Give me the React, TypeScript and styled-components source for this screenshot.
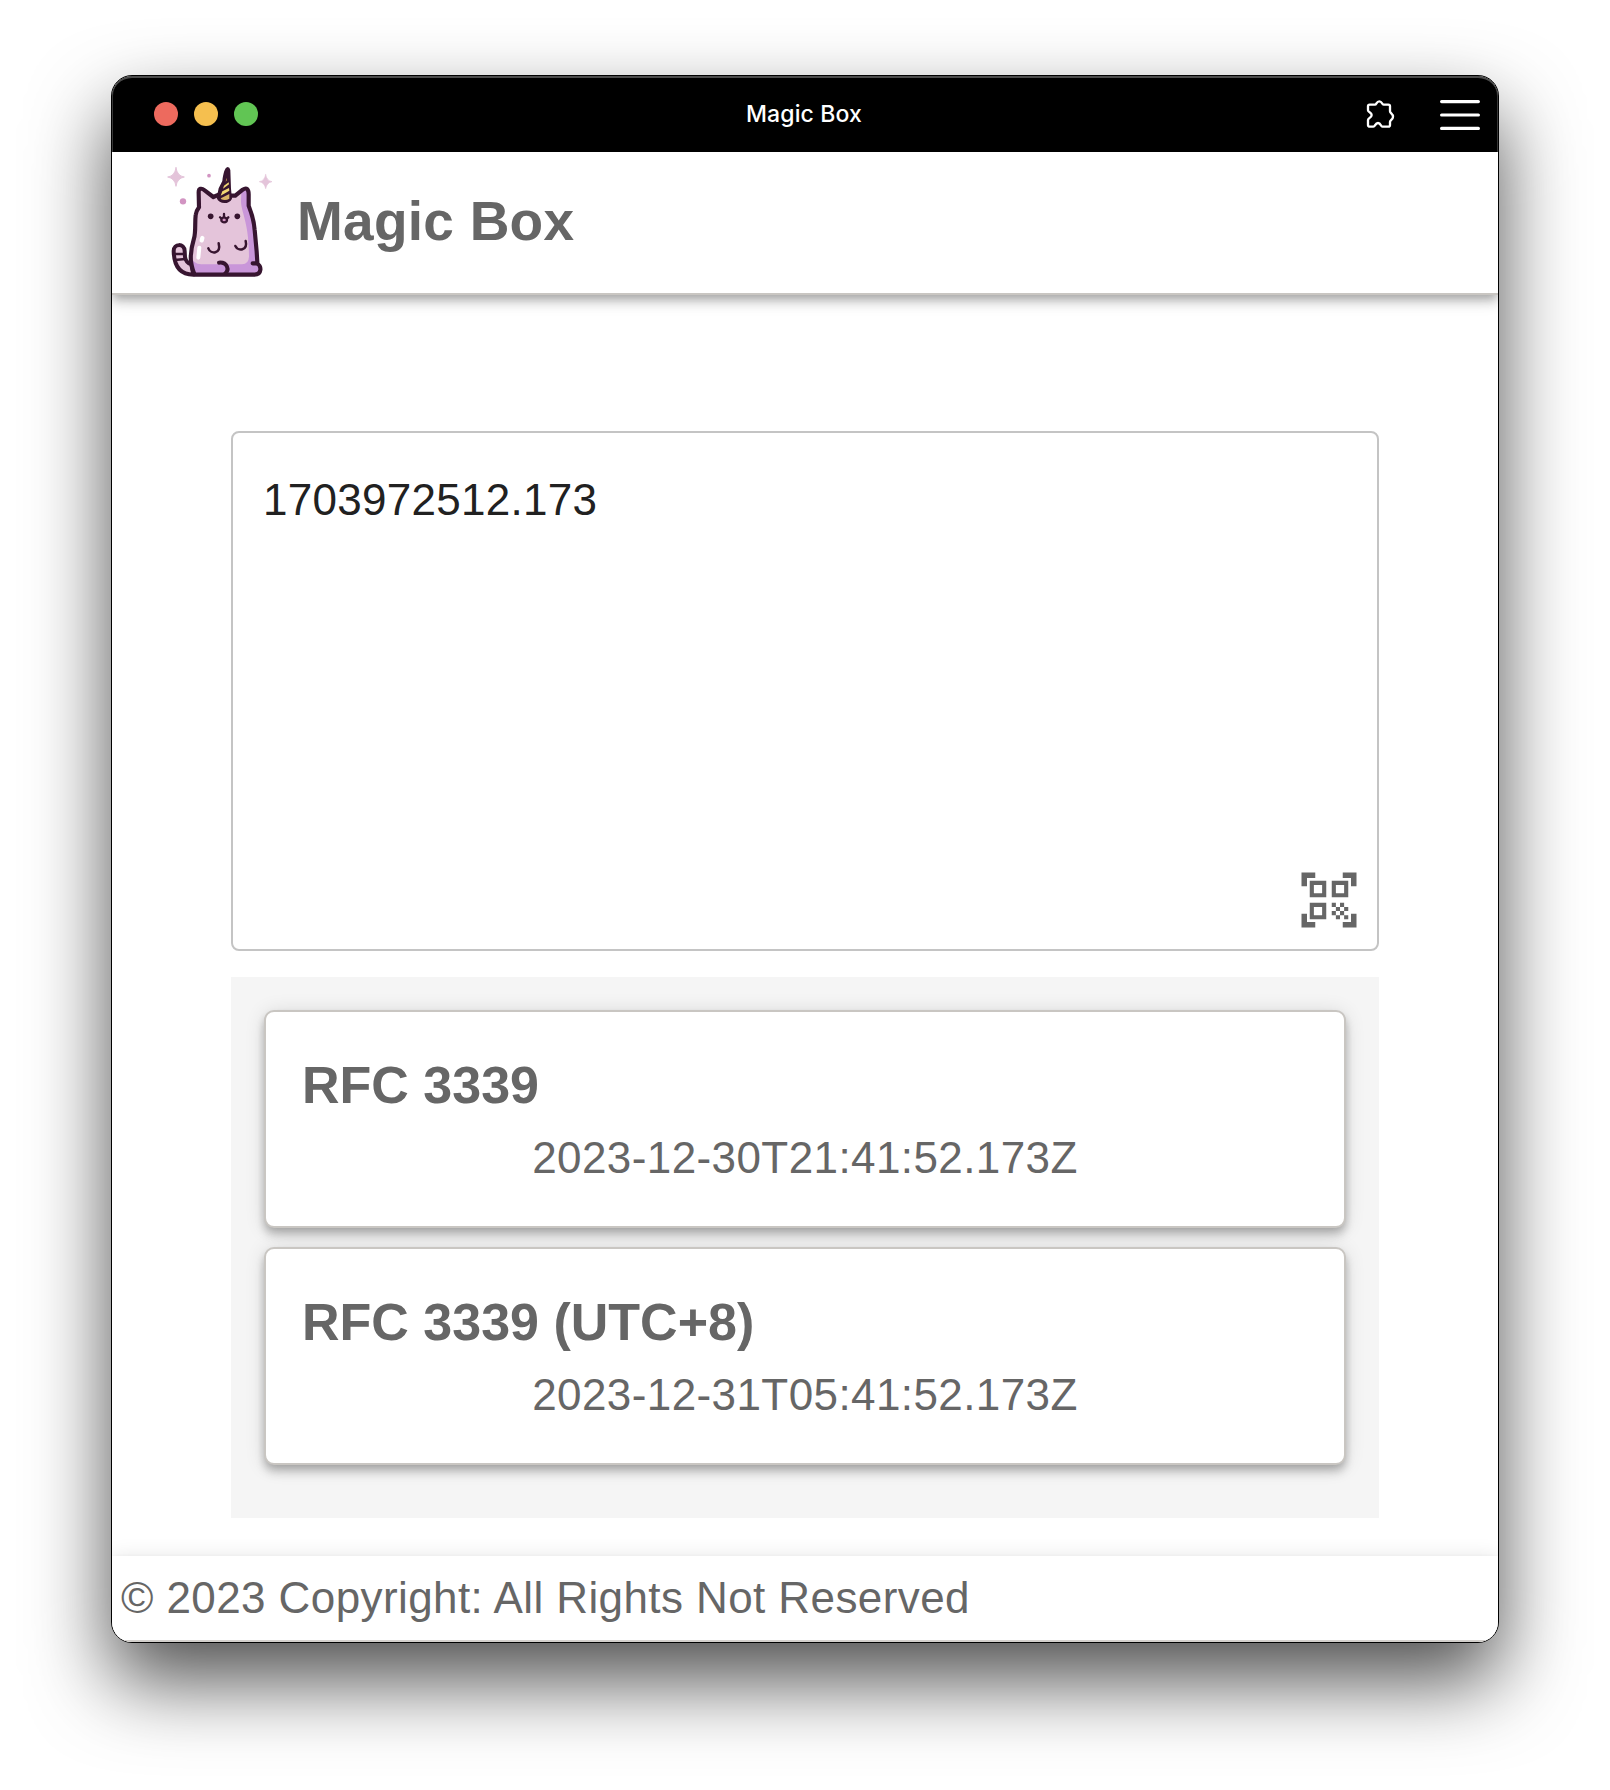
import React from 'react';
import styled, { createGlobalStyle } from 'styled-components';

const GlobalStyle = createGlobalStyle`
  *, *::before, *::after { box-sizing: border-box; }
  html, body { margin: 0; padding: 0; background: #fff; }
  body { overflow: hidden; }
`;

const Desktop = styled.div`
  width: 1610px;
  height: 1790px;
  padding: 75px 111px 0;
  overflow: hidden;
  background: #fff;
  font-family: 'Liberation Sans', Arial, sans-serif;
  color: #666;
`;

const Window = styled.div`
  width: 1388px;
  height: 1568px;
  display: flex;
  flex-direction: column;
  border: 1px solid #000;
  border-radius: 21px;
  background: #fff;
  overflow: hidden;
  box-shadow: 0 38px 80px rgba(0, 0, 0, 0.69);
`;

const TitleBar = styled.div`
  flex: none;
  height: 76px;
  display: grid;
  grid-template-columns: 1fr auto 1fr;
  align-items: center;
  padding: 0 18px 0 42px;
  background: #000;
  border-radius: 20px 20px 0 0;
  box-shadow: inset 0 2px 0 #4b4b4b, inset 1px 0 0 #383838, inset -1px 0 0 #383838;
`;

const Lights = styled.div`
  display: flex;
  gap: 16px;
`;

const Light = styled.span<{ $color: string }>`
  width: 24px;
  height: 24px;
  border-radius: 50%;
  background: ${(p) => p.$color};
`;

const WindowTitle = styled.div`
  font-family: Inter, Roboto, sans-serif;
  font-size: 23px;
  font-weight: 500;
  line-height: 28px;
  letter-spacing: 0.15px;
  color: #fff;
  transform: translateX(-13px);
`;

const Actions = styled.div`
  display: flex;
  justify-content: flex-end;
  align-items: center;
  gap: 44px;
  padding-top: 2px;

  svg { display: block; }
`;

const Header = styled.header`
  flex: none;
  height: 143px;
  display: flex;
  align-items: flex-start;
  gap: 17px;
  padding: 3px 48px 0;
  border-bottom: 2px solid #c9c6c2;
  box-shadow: 0 4px 8px -2px rgba(0, 0, 0, 0.2), 0 8px 10px rgba(0, 0, 0, 0.14), 0 2px 20px rgba(0, 0, 0, 0.12);

  svg { display: block; flex: none; }
`;

const AppName = styled.h1`
  margin: 33px 0 0;
  font-size: 55px;
  line-height: 66px;
  font-weight: 700;
  letter-spacing: 0.25px;
  white-space: nowrap;
`;

const Main = styled.main`
  flex: 1;
  display: flex;
  flex-direction: column;
  gap: 26px;
  padding: 136px 119px 0;
`;

const InputBox = styled.div`
  height: 520px;
  display: flex;
  flex-direction: column;
  justify-content: space-between;
  padding: 40px 15px 16px 30px;
  border: 2px solid #c4c4c4;
  border-radius: 8px;
`;

const InputText = styled.div`
  font-size: 44px;
  line-height: 54px;
  letter-spacing: 0.28px;
  color: #212121;
`;

const ScanButton = styled.button`
  align-self: flex-end;
  padding: 0;
  border: 0;
  background: none;
  color: #666;

  svg { display: block; }
`;

const Results = styled.section`
  height: 541px;
  display: flex;
  flex-direction: column;
  gap: 19px;
  padding: 33px 33px 0;
  background: #f5f5f5;
`;

const Card = styled.article`
  height: 218px;
  padding: 42px 36px 0;
  border: 2px solid #c9c6c2;
  border-radius: 10px;
  background: #fff;
  box-shadow: 0 4px 8px -2px rgba(0, 0, 0, 0.2), 0 8px 10px rgba(0, 0, 0, 0.14), 0 2px 20px rgba(0, 0, 0, 0.12);
`;

const CardTitle = styled.h2`
  margin: 0;
  font-size: 52px;
  line-height: 62px;
  font-weight: 700;
`;

const CardValue = styled.p`
  margin: 15px 0 0;
  font-size: 44px;
  line-height: 54px;
  letter-spacing: 0.41px;
  text-align: center;
`;

const Footer = styled.footer`
  flex: none;
  height: 86px;
  padding: 15px 9px 0;
  border-bottom: 2px solid #d3d0cc;
  background: #fff;
  font-size: 44px;
  line-height: 54px;
  letter-spacing: 0.41px;
  white-space: nowrap;
  box-shadow: 0 4px 8px -2px rgba(0, 0, 0, 0.2), 0 8px 10px rgba(0, 0, 0, 0.14), 0 2px 20px rgba(0, 0, 0, 0.12);
`;

const UnicornCat = () => (
  <svg width="120" height="130" viewBox="0 0 360 390" fill="none" strokeLinecap="round" strokeLinejoin="round">
    <path d="M48 38Q51 63 73 66Q51 70 48 94Q45 70 23 66Q45 63 48 38Z" fill="#e4c4da" stroke="#e4c4da" strokeWidth="3" />
    <path d="M317 59Q320 77 336 80Q320 83 317 101Q314 83 298 80Q314 77 317 59Z" fill="#e4c4da" stroke="#e4c4da" strokeWidth="2" />
    <circle cx="147" cy="62" r="5.5" fill="#d294c2" />
    <circle cx="69" cy="139" r="9.5" fill="#d294c2" />
    <path
      d="M100 359C62 359 42 335 41 288C41 265 73 264 74 288L75 306C77 320 84 325 94 328Z"
      fill="#e4c4da" stroke="#371530" strokeWidth="12"
    />
    <path d="M43 297H73M44 315L76 312" stroke="#371530" strokeWidth="7" />
    <path
      d="M117 157L116 110C117 98 126 100 134 106L160 125L226 122L248 104C260 96 266 106 265 118L266 152C277 180 282 195 284 225L290 290L293 325C306 331 304 359 283 359H106L93 320C90 292 96 270 102 250C108 230 104 205 107 180Q109 169 117 157Z"
      fill="#c996d9"
    />
    <path
      d="M117 157L116 110C117 98 126 100 134 106L160 125L226 122L244 112L243 140C244 160 251 175 256 200C262 225 267 260 267 305Q266 327 246 328H124Q98 326 95 305C92 285 99 265 102 250C108 230 104 205 107 180Q109 169 117 157Z"
      fill="#e4c4da"
    />
    <path d="M127 249L125 256" stroke="#fff" strokeWidth="13" />
    <path d="M118 278L115 308" stroke="#fff" strokeWidth="12" />
    <path
      d="M160 126L134 106C124 98 116 100 116 112L117 157Q108 169 107 180C104 205 108 230 102 250C96 270 90 292 93 320Q97 345 104 359H283C306 359 306 331 290 325H278M292 322L290 290L284 225C282 195 277 180 266 152V118C266 103 260 96 248 104L226 122M160 126L176 119M226 122H214"
      stroke="#371530" strokeWidth="12.5"
    />
    <path d="M177 323C202 321 210 345 194 357" stroke="#371530" strokeWidth="12" />
    <path
      d="M203 36C194 37 190 56 187 78L176 100L170 129C177 149 208 149 216 131L213 101L211 45Q209 36 203 36Z"
      fill="#371530"
    />
    <path d="M199 68L201 76L197 80Z" fill="#b58b4a" />
    <path d="M192 92L206 82L207 88L189 101Z" fill="#f3d873" />
    <path d="M187 109L207 99L208 107L182 122Z" fill="#f3d873" />
    <path d="M184 129L208 117V131Q196 139 182 132Z" fill="#dcb568" />
    <circle cx="152" cy="184" r="8.5" fill="#371530" />
    <circle cx="232" cy="184" r="8.5" fill="#371530" />
    <path d="M184 191Q183 202 192 202Q202 202 201 191" fill="#d294c2" stroke="#371530" strokeWidth="7" />
    <path d="M180 187Q186 194 192 185Q198 194 205 187M192 177V187" stroke="#371530" strokeWidth="7" />
    <path d="M145 280C152 299 184 297 176 265" stroke="#371530" strokeWidth="7.5" />
    <path d="M226 273C234 290 264 287 257 258" stroke="#371530" strokeWidth="7.5" />
  </svg>
);

const PuzzleIcon = () => (
  <svg width="30" height="30" viewBox="0 0 90 90" fill="none" stroke="#fff" strokeWidth="7" strokeLinejoin="round">
    <path d="M14 14H27C32 14 31 4 40 4C49 4 47 14 53 14H67Q72 14 72 19V34C72 40 81 41 81 50C81 59 72 60 72 66V75Q72 80 67 80H49C44 80 45 69 36 69C27 69 28 80 22 80H12Q6 80 6 75V60C6 54 17 53 17 45C17 37 6 37 6 31V19Q6 14 11 14Z" />
  </svg>
);

const MenuIcon = () => (
  <svg width="40" height="32" viewBox="0 0 40 32" stroke="#fff" strokeWidth="3.2" strokeLinecap="round">
    <path d="M1.6 2.6H38.4M1.6 16H38.4M1.6 29.4H38.4" />
  </svg>
);

const QrScanIcon = () => (
  <svg width="66" height="66" viewBox="0 0 24 24" fill="currentColor">
    <path d="M9.5 6.5v3h-3v-3h3M11 5H5v6h6V5zm-1.5 9.5v3h-3v-3h3M11 13H5v6h6v-6zm6.5-6.5v3h-3v-3h3M19 5h-6v6h6V5zm-6 8h1.5v1.5H13V13zm1.5 1.5H16V16h-1.5v-1.5zM16 13h1.5v1.5H16V13zm-3 3h1.5v1.5H13V16zm1.5 1.5H16V19h-1.5v-1.5zM16 16h1.5v1.5H16V16zm1.5-1.5H19V16h-1.5v-1.5zm0 3H19V19h-1.5v-1.5zM22 7h-2V4h-3V2h5v5zm0 15v-5h-2v3h-3v2h5zM2 22h5v-2H4v-3H2v5zM2 2v5h2V4h3V2H2z" />
  </svg>
);

const results = [
  { title: 'RFC 3339', value: '2023-12-30T21:41:52.173Z' },
  { title: 'RFC 3339 (UTC+8)', value: '2023-12-31T05:41:52.173Z' },
];

export default function App() {
  return (
    <>
      <GlobalStyle />
      <Desktop>
        <Window>
          <TitleBar>
            <Lights>
              <Light $color="#ed6a5e" />
              <Light $color="#f5bf4f" />
              <Light $color="#61c554" />
            </Lights>
            <WindowTitle>Magic Box</WindowTitle>
            <Actions>
              <PuzzleIcon />
              <MenuIcon />
            </Actions>
          </TitleBar>
          <Header>
            <UnicornCat />
            <AppName>Magic Box</AppName>
          </Header>
          <Main>
            <InputBox>
              <InputText>1703972512.173</InputText>
              <ScanButton>
                <QrScanIcon />
              </ScanButton>
            </InputBox>
            <Results>
              {results.map((r) => (
                <Card key={r.title}>
                  <CardTitle>{r.title}</CardTitle>
                  <CardValue>{r.value}</CardValue>
                </Card>
              ))}
            </Results>
          </Main>
          <Footer>© 2023 Copyright: All Rights Not Reserved</Footer>
        </Window>
      </Desktop>
    </>
  );
}
